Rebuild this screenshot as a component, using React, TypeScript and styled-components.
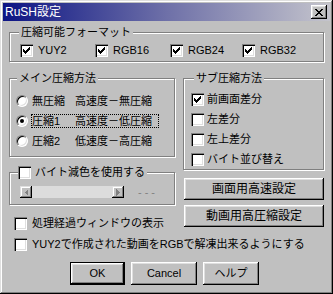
import * as React from "react";
import styled, { createGlobalStyle } from "styled-components";

const GlobalStyle = createGlobalStyle`
  html, body {
    margin: 0;
    padding: 0;
    background: #c0c0c0;
  }
  * {
    box-sizing: border-box;
  }
`;

const FONT = `"Liberation Sans", "Noto Sans CJK JP", sans-serif`;

const SWindow = styled.div`
  width: 333px;
  height: 294px;
  padding: 3px;
  display: flex;
  flex-direction: column;
  background: #c0c0c0;
  box-shadow: inset -1px -1px #000, inset 1px 1px #dfdfdf, inset -2px -2px #808080,
    inset 2px 2px #fff;
  font-family: ${FONT};
  font-size: 11px;
  color: #000;
`;

const STitleBar = styled.div`
  height: 18px;
  flex: none;
  display: flex;
  align-items: center;
  justify-content: space-between;
  padding: 0 3px 0 2px;
  background: linear-gradient(90deg, #0c1484 0%, #6e70a8 50%, #c4c4cc 100%);
`;

const STitle = styled.span`
  color: #fff;
  font-size: 12px;
  line-height: 18px;
`;

const SCloseButton = styled.div`
  width: 16px;
  height: 14px;
  display: flex;
  align-items: center;
  justify-content: center;
  background: #c0c0c0;
  box-shadow: inset -1px -1px #000, inset 1px 1px #fff, inset -2px -2px #808080,
    inset 2px 2px #dfdfdf;
`;

const SBody = styled.div`
  display: flex;
  flex-direction: column;
  padding: 5px 6px 0 6px;
`;

const SGroup = styled.fieldset<{ $pad: string; $top?: number }>`
  margin: ${(p) => p.$top || 0}px 0 0 0;
  padding: ${(p) => p.$pad};
  min-width: 0;
  border: 1px solid #808080;
  box-shadow: 1px 1px 0 #fff, inset 1px 1px 0 #fff;
`;

const SLegend = styled.legend<{ $indent: number; $side?: number }>`
  margin-left: ${(p) => p.$indent}px;
  padding: 0 2px 0 ${(p) => (p.$side === undefined ? 2 : p.$side)}px;
  height: 13px;
  line-height: 13px;
  display: flex;
  align-items: center;
  background: #c0c0c0;
`;

const SFormatRow = styled.div`
  display: flex;
  height: 13px;
`;

const SCheckItem = styled.label<{ $w?: number; $gap?: number }>`
  display: flex;
  align-items: center;
  height: 13px;
  gap: ${(p) => p.$gap || 5}px;
  width: ${(p) => (p.$w ? `${p.$w}px` : "auto")};
  line-height: 13px;
  white-space: nowrap;
`;

const SCheckLine = styled.div<{ $top: number }>`
  display: flex;
  margin: ${(p) => p.$top}px 0 0 5px;
`;

const SBox = styled.span`
  width: 13px;
  height: 13px;
  flex: none;
  display: flex;
  align-items: center;
  justify-content: center;
  background: #fff;
  box-shadow: inset 1px 1px #808080, inset 2px 2px #000, inset -1px -1px #fff,
    inset -2px -2px #dfdfdf;
`;

const SColumns = styled.div`
  display: flex;
  gap: 8px;
  margin-top: 10px;
`;

const SColumn = styled.div<{ $w: number }>`
  width: ${(p) => p.$w}px;
  flex: none;
  display: flex;
  flex-direction: column;
`;

const SRadioRow = styled.div`
  display: flex;
  align-items: center;
  gap: 3px;
  height: 20px;
`;

const SRadio = styled.span<{ $on?: boolean }>`
  width: 12px;
  height: 12px;
  flex: none;
  border-radius: 50%;
  display: flex;
  align-items: center;
  justify-content: center;
  background: #fff;
  border: 1px solid;
  border-color: #808080 #fff #fff #808080;
  box-shadow: inset 1px 1px #000, inset -1px -1px #dfdfdf;

  &::after {
    content: "";
    width: 4px;
    height: 4px;
    border-radius: 50%;
    background: ${(p) => (p.$on ? "#000" : "transparent")};
  }
`;

const SRadioLabel = styled.span<{ $focus?: boolean }>`
  display: flex;
  height: 14px;
  line-height: 12px;
  padding: 0 6px 0 0;
  border: 1px dotted ${(p) => (p.$focus ? "#000" : "transparent")};
  white-space: nowrap;
`;

const SRadioName = styled.span`
  width: 43px;
`;

const SSubList = styled.div`
  display: flex;
  flex-direction: column;
  gap: 7px;
`;

const SScrollRow = styled.div`
  display: flex;
  align-items: center;
  height: 12px;
`;

const SScrollBar = styled.div`
  width: 104px;
  height: 12px;
  display: flex;
`;

const SScrollArrow = styled.span`
  width: 12px;
  height: 12px;
  flex: none;
  display: flex;
  align-items: center;
  justify-content: center;
  background: #c0c0c0;
  box-shadow: inset -1px -1px #000, inset 1px 1px #dfdfdf, inset -2px -2px #808080,
    inset 2px 2px #fff;
`;

const SScrollTrack = styled.span`
  flex: 1;
  background: #dcdcdc;
`;

const SDisabledText = styled.span`
  margin-left: 14px;
  color: #808080;
  letter-spacing: 3px;
`;

const SButton = styled.button<{ $w?: number; $default?: boolean }>`
  font: inherit;
  color: #000;
  margin: 0;
  padding: 0;
  width: ${(p) => (p.$w ? `${p.$w}px` : "auto")};
  background: #c0c0c0;
  border: ${(p) => (p.$default ? "1px solid #000" : "none")};
  box-shadow: inset -1px -1px #000, inset 1px 1px #fff, inset -2px -2px #808080,
    inset 2px 2px #dfdfdf;
  line-height: 13px;
  white-space: nowrap;
`;

const SWideButton = styled(SButton)<{ $top: number }>`
  height: 22px;
  margin: ${(p) => p.$top}px 0 0 1px;
  font-size: 12px;
`;

const SButtonRow = styled.div`
  display: flex;
  gap: 6px;
  height: 23px;
  margin-top: 11px;
  padding-left: 61px;
`;

const CheckMark = () => (
  <svg width="7" height="7" viewBox="0 0 7 7" shapeRendering="crispEdges">
    <path
      d="M0 2h1v3H0z M1 3h1v3H1z M2 4h1v3H2z M3 3h1v3H3z M4 2h1v3H4z M5 1h1v3H5z M6 0h1v3H6z"
      fill="#000"
    />
  </svg>
);

interface CheckProps {
  label: string;
  checked?: boolean;
  w?: number;
  gap?: number;
}

const Check = ({ label, checked, w, gap }: CheckProps) => (
  <SCheckItem $w={w} $gap={gap}>
    <SBox>{checked && <CheckMark />}</SBox>
    <span>{label}</span>
  </SCheckItem>
);

const Arrow = ({ dir }: { dir: "left" | "right" }) => (
  <svg width="4" height="7" viewBox="0 0 4 7" shapeRendering="crispEdges">
    <path
      d={dir === "left" ? "M4 0v7L0.5 3.5z" : "M0 0v7L3.5 3.5z"}
      fill="#808080"
    />
  </svg>
);

const formats = [
  { name: "YUY2", w: 75 },
  { name: "RGB16", w: 75 },
  { name: "RGB24", w: 72 },
  { name: "RGB32", w: 0 },
];

const modes = [
  { name: "無圧縮", desc: "高速度－無圧縮", on: false },
  { name: "圧縮1", desc: "高速度－低圧縮", on: true },
  { name: "圧縮2", desc: "低速度－高圧縮", on: false },
];

const subModes = [
  { name: "前画面差分", on: true },
  { name: "左差分", on: false },
  { name: "左上差分", on: false },
  { name: "バイト並び替え", on: false },
];

export default function App() {
  return (
    <SWindow>
      <GlobalStyle />
      <STitleBar>
        <STitle>RuSH設定</STitle>
        <SCloseButton>
          <svg width="8" height="7" viewBox="0 0 8 7" shapeRendering="crispEdges">
            <path
              d="M0 0h2v1H0z M6 0h2v1H6z M1 1h2v1H1z M5 1h2v1H5z M2 2h4v1H2z M3 3h2v1H3z M2 4h4v1H2z M1 5h2v1H1z M5 5h2v1H5z M0 6h2v1H0z M6 6h2v1H6z"
              fill="#000"
            />
          </svg>
        </SCloseButton>
      </STitleBar>
      <SBody>
        <SGroup $pad="5px 0 4px 10px">
          <SLegend $indent={-1}>圧縮可能フォーマット</SLegend>
          <SFormatRow>
            {formats.map((f) => (
              <Check key={f.name} label={f.name} checked w={f.w || undefined} />
            ))}
          </SFormatRow>
        </SGroup>

        <SColumns>
          <SColumn $w={166}>
            <SGroup $pad="6px 0 5px 6px">
              <SLegend $indent={1}>メイン圧縮方法</SLegend>
              {modes.map((m) => (
                <SRadioRow key={m.name}>
                  <SRadio $on={m.on} />
                  <SRadioLabel $focus={m.on}>
                    <SRadioName>{m.name}</SRadioName>
                    <span>{m.desc}</span>
                  </SRadioLabel>
                </SRadioRow>
              ))}
            </SGroup>

            <SGroup $pad="7px 0 6px 10px" $top={9}>
              <SLegend $indent={-2} $side={0}>
                <Check label="バイト減色を使用する" gap={4} />
              </SLegend>
              <SScrollRow>
                <SScrollBar>
                  <SScrollArrow>
                    <Arrow dir="left" />
                  </SScrollArrow>
                  <SScrollTrack />
                  <SScrollArrow>
                    <Arrow dir="right" />
                  </SScrollArrow>
                </SScrollBar>
                <SDisabledText>---</SDisabledText>
              </SScrollRow>
            </SGroup>

            <SCheckLine $top={12}>
              <Check label="処理経過ウィンドウの表示" />
            </SCheckLine>
          </SColumn>

          <SColumn $w={141}>
            <SGroup $pad="8px 0 3px 7px">
              <SLegend $indent={3}>サブ圧縮方法</SLegend>
              <SSubList>
                {subModes.map((s) => (
                  <Check key={s.name} label={s.name} checked={s.on} gap={3} />
                ))}
              </SSubList>
            </SGroup>
            <SWideButton $top={8}>画面用高速設定</SWideButton>
            <SWideButton $top={5}>動画用高圧縮設定</SWideButton>
          </SColumn>
        </SColumns>

        <SCheckLine $top={8}>
          <Check label="YUY2で作成された動画をRGBで解凍出来るようにする" />
        </SCheckLine>

        <SButtonRow>
          <SButton $w={55} $default>
            OK
          </SButton>
          <SButton $w={66}>Cancel</SButton>
          <SButton $w={56}>ヘルプ</SButton>
        </SButtonRow>
      </SBody>
    </SWindow>
  );
}
